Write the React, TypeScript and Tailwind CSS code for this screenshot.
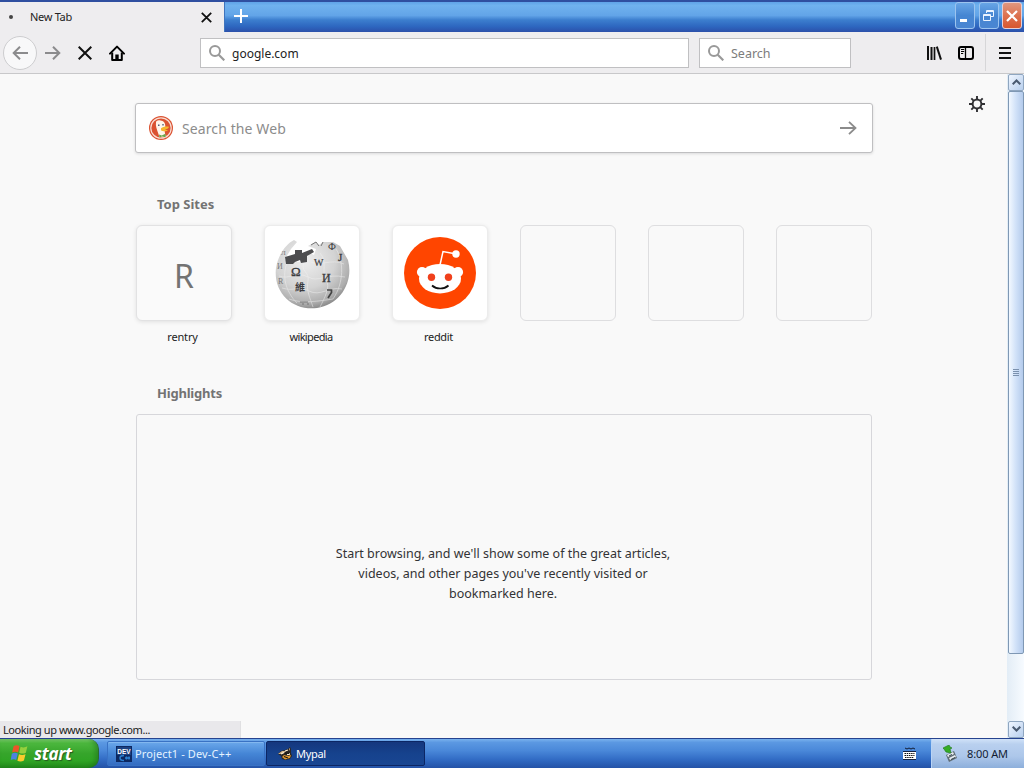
import type { ReactNode } from "react";

const ui = "font-['Noto_Sans','Open_Sans',sans-serif]";

function SearchGlyph() {
  return (
    <svg className="block shrink-0" width="16" height="16" viewBox="0 0 16 16" fill="none" stroke="#999" strokeWidth="2">
      <circle cx="6" cy="6" r="5" />
      <path d="M9.7 9.7l5.6 5.6" strokeWidth="2.2" />
    </svg>
  );
}

function WindowButton({ close, children }: { close?: boolean; children: ReactNode }) {
  const look = close
    ? "bg-linear-to-b from-[#e0977f] via-[#dd7250] to-[#d8572f] border-[#e6cfd6]"
    : "bg-linear-to-b from-[#68a5e6] via-[#4686d2] to-[#4a86d2] border-[#9cc4ef]";
  return (
    <div className={`flex h-[27px] w-5 items-center justify-center rounded-[3px] border ${look}`}>
      {children}
    </div>
  );
}

function TitleBar() {
  return (
    <div className="flex h-8 border-t-2 border-[#2f4fa0]">
      <div className="flex h-[30px] w-[224px] shrink-0 items-center bg-[#eeedef] pl-[9px]">
        <div className="size-1 rounded-full bg-[#444]" />
        <span className="ml-[17px] text-[11px] leading-4 tracking-[-0.3px] text-[#222]">New Tab</span>
        <svg className="mr-[12px] ml-auto block" width="11" height="11" viewBox="0 0 11 11" stroke="#111" strokeWidth="1.8">
          <path d="M.8.8l9.4 9.4M10.2.8L.8 10.2" />
        </svg>
      </div>
      <div className="flex h-[30px] grow items-start border-l border-[#3f74bd] bg-[linear-gradient(to_bottom,#5fa3e8_0%,#70b2ee_12%,#62a4e8_45%,#3c7ece_60%,#2d66bf_82%,#2c50aa_100%)] pl-[9px]">
        <svg className="mt-[7px] block" width="14" height="14" viewBox="0 0 14 14" stroke="#fff" strokeWidth="2">
          <path d="M7 0v14M0 7h14" />
        </svg>
        <div className="mr-[2px] ml-auto flex gap-[3.5px]">
          <WindowButton>
            <div className="mt-[10px] mr-1 h-[3px] w-[7px] bg-white" />
          </WindowButton>
          <WindowButton>
            <svg className="block" width="11" height="11" viewBox="0 0 11 11" fill="none" stroke="#e9f3ff">
              <path d="M3.5 3V.5h7v6H8M3 1.5h7.5" />
              <path d="M.5 4.5h7v6h-7zM.5 5.5h7" />
            </svg>
          </WindowButton>
          <WindowButton close>
            <svg className="block" width="12" height="12" viewBox="0 0 12 12" stroke="#fff" strokeWidth="2.2">
              <path d="M1 1l10 10M11 1L1 11" />
            </svg>
          </WindowButton>
        </div>
      </div>
    </div>
  );
}

function Arrow({ back }: { back?: boolean }) {
  return (
    <svg className="block" width="16" height="14" viewBox="0 0 16 14" fill="none" stroke="#8b8b8d" strokeWidth="2">
      {back ? <path d="M16 7H1.5M8 .8L1.7 7 8 13.2" /> : <path d="M0 7h14.5M8 .8L14.3 7 8 13.2" />}
    </svg>
  );
}

function Toolbar() {
  return (
    <div className="flex h-[42px] items-center border-b border-[#c8c8ca] bg-[#eeedef] pl-[3px]">
      <div className="flex size-[34px] shrink-0 items-center justify-center rounded-full border border-[#cdcdcf] bg-[#f8f8f9]">
        <Arrow back />
      </div>
      <div className="ml-2">
        <Arrow />
      </div>
      <svg className="ml-[17px] block" width="14" height="14" viewBox="0 0 14 14" stroke="#111" strokeWidth="2">
        <path d="M.7.7l12.6 12.6M13.3.7L.7 13.3" />
      </svg>
      <svg className="ml-[17px] block" width="16" height="16" viewBox="0 0 16 16" fill="none" stroke="#000" strokeWidth="2">
        <path d="M1 8.6L8 1.6l7 7" strokeLinejoin="round" strokeLinecap="round" />
        <path d="M3.2 7.500V15h9.600V7.500" strokeLinejoin="round" />
        <path d="M6.300 9.500h3.400V15H6.300z" fill="#000" stroke="none" />
      </svg>
      <div className="ml-[75px] flex h-[30px] w-[489px] items-center border border-[#c0c0c2] bg-white pl-2">
        <SearchGlyph />
        <span className="mt-[2px] ml-[7px] text-[12px] leading-5 text-[#222]">google.com</span>
      </div>
      <div className="ml-[10px] flex h-[30px] w-[152px] items-center border border-[#c0c0c2] bg-white pl-2">
        <SearchGlyph />
        <span className="mt-[2px] ml-[7px] text-[12.5px] leading-5 text-[#7c7c7c]">Search</span>
      </div>
      <svg className="ml-[76px] block" width="15" height="14" viewBox="0 0 15 14" stroke="#111" strokeWidth="2">
        <path d="M1 0v14M4.500 1v13" />
        <path d="M7.500 1v13" strokeWidth="1.700" />
        <path d="M9.800 .6L14 13.600" />
      </svg>
      <svg className="ml-[16px] block" width="16" height="14" viewBox="0 0 16 14" fill="none" stroke="#000">
        <rect x="1" y="1" width="14" height="12" rx="2" strokeWidth="2" />
        <path d="M7.5 1v12" strokeWidth="1.3" />
        <path d="M3 3.500h3.200M3 5.500h3.200M3 7.500h2.200" />
      </svg>
      <div className="ml-[11px] h-[37px] w-px bg-[#d6d6d8]" />
      <svg className="ml-[13px] block" width="12" height="12" viewBox="0 0 12 12" stroke="#111" strokeWidth="2">
        <path d="M0 1h12M0 6h12M0 11h12" />
      </svg>
    </div>
  );
}

function Duck() {
  return (
    <svg className="block" width="24" height="24" viewBox="0 0 24 24">
      <circle cx="12" cy="12" r="12" fill="#db5231" />
      <circle cx="12" cy="12" r="10.2" fill="none" stroke="#f8ded5" strokeWidth="1.2" />
      <path d="M7 6.2c.3-1.6 2.5-2.4 4.5-1.6 3 .2 5 2.4 4.8 5.6l-.6 5.3.8 4.9c-2 .9-4.300 1-6.200.4C9.300 17 7.100 12.200 6.900 9.200z" fill="#fff5ea" />
      <path d="M9 9.300h1.500M13.300 8.700h1.400" stroke="#50617b" strokeWidth="1.500" />
      <path d="M12 12.300c2-1.600 5-2 8-1.500-.5 2-2.500 2.600-4 2.800 1 .5 2.200.6 3 .4-1 1.800-5.600 1.700-7 .2z" fill="#f6b52e" />
      <path d="M10 18.500l2.700 1 3.800-1.700v3.500l-3.500-.8-2.500 1z" fill="#68a74b" />
    </svg>
  );
}

function WikipediaGlobe() {
  return (
    <svg className="block" width="76" height="76" viewBox="0 0 76 76">
      <defs>
        <radialGradient id="globe" cx=".4" cy=".3" r=".74">
          <stop offset="0" stopColor="#eeeeee" />
          <stop offset=".55" stopColor="#d3d3d3" />
          <stop offset=".85" stopColor="#adadad" />
          <stop offset="1" stopColor="#808080" />
        </radialGradient>
      </defs>
      <path
        d="M20 5l3 2-6 7-6 10 4 4 15-2 6-8 4 2 2-6-8-3 7-4 4 3 4-3 10 0 7 4 8 14C80 47 66 70 43 73 19 76-1 58 2 33 4 20 12 9 20 5z"
        fill="url(#globe)"
      />
      <g fill="none" stroke="#f2f2f2" strokeWidth=".8" opacity=".6">
        <path d="M13 28c-5 12-2 28 10 40M30 28c-4 8 6 9 4 18s2 17 5 26M46 18c8 9 1 18 6 26s-2 20-6 28M62 14c8 12 8 34-3 50" />
        <path d="M5 41c10 4 18-5 29 1s18-4 37 0M8 53c13 4 16-3 27 3s21-5 33-2M37 27c9 5 20-4 33 2M15 64c13 5 30 2 44 0" />
      </g>
      <path d="M11 22l10-3 0-4 7 0v3l10-4 2 3-7 4 0 6-6 1-1-3-5 2-2 2-7 0z" fill="#4d4d4f" />
      <g fill="#3b3b3e" className="font-['Liberation_Serif','Noto_Sans_CJK_SC',serif]">
        <text x="17" y="41" fontSize="13" stroke="#3b3b3e" strokeWidth=".3">Ω</text>
        <text x="40" y="31" fontSize="10" stroke="#3b3b3e" strokeWidth=".2">W</text>
        <text x="48" y="47" fontSize="12" stroke="#3b3b3e" strokeWidth=".3">И</text>
        <text x="21" y="56" fontSize="10" className="font-['Noto_Sans_CJK_SC',sans-serif] font-bold">維</text>
        <path d="M53 55h4.500v2.500L54 63" fill="none" stroke="#444" strokeWidth="1.700" />
        <text x="54" y="15" fontSize="10">Ф</text>
        <text x="64" y="26" fontSize="11" stroke="#3b3b3e" strokeWidth=".3">J</text>
        <text x="3" y="34" fontSize="8" fill="#777">И</text>
        <text x="4" y="49" fontSize="8" fill="#777">R</text>
        <text x="7" y="20" fontSize="7" fill="#777">Л</text>
        <path d="M26 67h8M28 69h2M33 69h2" stroke="#777" />
        <path d="M37 10l5-3 3 4M47 11l2-4" fill="none" stroke="#777" />
      </g>
    </svg>
  );
}

function RedditFace() {
  return (
    <svg className="block" width="72" height="72" viewBox="0 0 72 72">
      <circle cx="36" cy="36" r="36" fill="#ff4500" />
      <path d="M36 28l3-13.500 12 2.300" fill="none" stroke="#fff" strokeWidth="1.500" />
      <circle cx="52" cy="17" r="3.700" fill="#fff" />
      <circle cx="18" cy="35" r="5.100" fill="#fff" />
      <circle cx="54" cy="35" r="5.100" fill="#fff" />
      <ellipse cx="36" cy="41.700" rx="21" ry="14.800" fill="#fff" />
      <circle cx="27.500" cy="40.300" r="3.700" fill="#f0401c" />
      <circle cx="44.500" cy="40.300" r="3.700" fill="#f0401c" />
      <path d="M28 48.500c4.500 4 12 4 16.500 0" fill="none" stroke="#111" strokeWidth="1.700" />
    </svg>
  );
}

function Tile({ label, white, children }: { label?: ReactNode; white?: boolean; children?: ReactNode }) {
  const look = label
    ? `shadow-[0_1px_4px_rgba(12,12,13,0.1)] ${white ? "bg-white border-[#ececec]" : "bg-[#fafafa] border-[#e2e2e3]"}`
    : "border-[#dedee0]";
  return (
    <div className="flex w-24 flex-col items-center">
      <div className={`flex size-24 items-center justify-center rounded-md border ${look}`}>{children}</div>
      {label && <div className="mt-2 mr-[3px] flex text-[11px] leading-4 text-[#222]">{label}</div>}
    </div>
  );
}

function NewTabPage() {
  return (
    <div className="flex w-[1007px] flex-col bg-[#f9f9f9]">
      <div className="flex h-[79px] items-start">
        <div className="mt-[29px] ml-[135px] flex h-[50px] w-[738px] items-center rounded-[3px] border border-[#bfbfc1] bg-white pl-[13px] shadow-[0_1px_3px_rgba(12,12,13,0.12)]">
          <Duck />
          <span className="mt-px ml-[9px] text-[14px] leading-5 tracking-[0.1px] text-[#8c8c8c]">Search the Web</span>
          <svg className="mr-[15px] ml-auto block" width="17" height="14" viewBox="0 0 17 14" fill="none" stroke="#8b8b8b" strokeWidth="1.800">
            <path d="M0 7h15.500M9 .8L15.500 7 9 13.200" />
          </svg>
        </div>
        <svg className="mt-[22px] ml-[96px] block" width="16" height="16" viewBox="0 0 16 16" fill="none" stroke="#303033" strokeWidth="2">
          <circle cx="8" cy="8" r="4.400" />
          <path d="M8 0v3.500M8 12.500v3.500M0 8h3.500M12.500 8h3.500M2.300 2.300l2.500 2.500M11.200 11.200l2.500 2.500M2.300 13.700l2.500-2.500M11.200 4.800l2.500-2.500" strokeWidth="1.900" />
        </svg>
      </div>
      <h2 className="mt-[41px] ml-[157px] text-[13px] leading-5 font-bold text-[#737373]">Top Sites</h2>
      <div className="mt-[11px] ml-[136px] flex h-[120px] gap-8">
        <Tile label={<span className="tracking-[-0.15px]">rentry</span>}>
          <span className="mt-1.5 text-[32px] leading-10 text-[#737373]">R</span>
        </Tile>
        <Tile white label={<span className="ml-px tracking-[-0.65px]">wikipedia</span>}>
          <WikipediaGlobe />
        </Tile>
        <Tile white label={<span className="tracking-[-0.35px]">reddit</span>}>
          <RedditFace />
        </Tile>
        <Tile />
        <Tile />
        <Tile />
      </div>
      <h2 className="mt-[38px] ml-[157px] text-[13px] leading-5 font-bold tracking-[-0.2px] text-[#737373]">Highlights</h2>
      <div className="mt-[11px] ml-[136px] flex h-[266px] w-[736px] justify-center rounded-[3px] border border-[#d7d7db] pt-[129px] pr-[2px]">
        <p className="text-center text-[12.500px] leading-5 text-[#333335]">
          Start browsing, and we'll show some of the great articles,
          <br />
          videos, and other pages you've recently visited or
          <br />
          bookmarked here.
        </p>
      </div>
      <div className="mt-auto flex h-[17px] w-[241px] items-center border-r border-[#e0e0e2] bg-[#e9e8eb] pt-px pl-[3px] text-[11px] leading-4 tracking-[-0.43px] text-[#222]">
        Looking up www.google.com...
      </div>
    </div>
  );
}

function ScrollButton({ down }: { down?: boolean }) {
  return (
    <div className="flex h-[17px] w-4 items-center justify-center rounded-[2px] border border-[#8fa6c0] bg-linear-to-br from-[#f0f6ff] to-[#b8cfed] pb-px">
      <svg className="block" width="9" height="6" viewBox="0 0 9 6" fill="none" stroke="#4a5a70" strokeWidth="2">
        {down ? <path d="M.7.7l3.800 3.800L8.300.7" /> : <path d="M.7 5.300l3.800-3.800 3.800 3.800" />}
      </svg>
    </div>
  );
}

function ScrollBar() {
  return (
    <div className="flex w-[17px] flex-col items-end bg-linear-to-r from-[#e3edf6] to-[#f7fbff]">
      <ScrollButton />
      <div className="flex h-[563px] w-4 flex-col items-center justify-center gap-px rounded-[2px] border border-[#7f98b4] bg-linear-to-r from-[#f2f8ff] via-[#d0e1f8] to-[#b4cbec] pb-px">
        {[0, 1, 2, 3].map((n) => (
          <div key={n} className="h-px w-1.5 bg-[#7b91ae]" />
        ))}
      </div>
      <div className="mt-auto">
        <ScrollButton down />
      </div>
    </div>
  );
}

function WindowsFlag() {
  return (
    <svg className="block" width="19" height="19" viewBox="0 0 17 18">
      <path d="M3 2c2-1.300 4-1 5.500 0L7.200 8C5.500 7 3.500 7 1.500 8z" fill="#ed5529" />
      <path d="M9.500 2.500c2 1 4 1 6.500-.3l-1.500 6c-2 1.200-4 1.200-6.300.1z" fill="#95cf3d" />
      <path d="M1.200 9.200c2-1.200 4-1 5.700-.1l-1.500 6c-1.600-.9-3.500-.9-5.200 0z" fill="#4c83e0" />
      <path d="M8 9.600c2 1 4 1 6.200 0l-1.500 6c-2 1.200-4.200 1.200-6.200.2z" fill="#f9cb2d" />
    </svg>
  );
}

function TaskBar() {
  return (
    <div className="flex h-[30px] border-t border-[#26438f] bg-[linear-gradient(to_bottom,#79b2ee_0%,#5b98e2_12%,#4a88d9_40%,#326cc5_70%,#2452a6_100%)]">
      <div className="flex h-[29px] w-[99px] shrink-0 items-center rounded-r-[10px] border-r border-[#2a6b30] bg-[linear-gradient(to_bottom,#7fd070_0%,#4cb73e_14%,#36a52b_50%,#2fa424_75%,#228a1b_100%)] pl-[10px] shadow-[inset_-3px_0_4px_rgba(20,90,20,0.35)]">
        <WindowsFlag />
        <span className="ml-[5px] font-['Open_Sans','Noto_Sans',sans-serif] text-[17px] leading-6 font-bold tracking-[-0.3px] text-white italic [text-shadow:1px_1px_1px_#25591f]">
          start
        </span>
      </div>
      <div className="mt-[2px] ml-2 flex h-[25px] w-[158px] items-center rounded-[2px] border border-[#3972c4] bg-linear-to-b from-[#6ba8eb] via-[#4586d6] to-[#356dc2] pl-[8px] shadow-[inset_0_1px_0_#82b7ef]">
        <svg className="block" width="16" height="16" viewBox="0 0 16 16">
          <rect width="16" height="16" fill="#0c2861" />
          <rect x="1" y="1" width="14" height="8" fill="#1c4180" />
          <text x="8" y="7.500" textAnchor="middle" fontSize="6.500" fill="#fff" className="font-['Liberation_Sans',sans-serif] font-bold">DEV</text>
          <path d="M8 9.500c-3 0-4 1-4 2.500s1 2.500 4 2.500M9 12h5M10.500 10.500v3M13 10.500v3" stroke="#2b80d0" strokeWidth="1.500" fill="none" />
        </svg>
        <span className="ml-[3px] text-[11px] leading-4 tracking-[0.12px] text-[#e5f3ff]">Project1 - Dev-C++</span>
      </div>
      <div className="mt-[2px] ml-[1px] flex h-[25px] w-[159px] items-center rounded-[2px] border border-[#0c2664] bg-linear-to-b from-[#15377e] via-[#16428d] to-[#194692] pl-[10px]">
        <svg className="block" width="16" height="16" viewBox="0 0 16 16">
          <path d="M1 8l3-3 4-1 3-1 2-2 1 2v4l1 3-2 3-5 1-3-1-1-3z" fill="#2b2623" />
          <path d="M1 8l4-3 4 0-2 2-4 1zM12 3l1-1v3z" fill="#d3b68c" />
          <path d="M5 11l2-2 4 1 3-1-1 3-5 1.500z" fill="#dc952e" />
          <path d="M4 8l3-1.500M10 8.500l3-.5M8 5l3-1" stroke="#fff1d2" strokeWidth="1.300" />
          <path d="M8 7l4 .5M7 10.500l4 1.500" stroke="#111" />
        </svg>
        <span className="ml-[3px] text-[11px] leading-4 tracking-[-0.3px] text-white">Mypal</span>
      </div>
      <div className="ml-auto flex items-center pr-[15px]">
        <svg className="block" width="13" height="14" viewBox="0 0 13 14">
          <path d="M2 1l2 1 2-1 2 1 2-1 2 1" fill="none" stroke="#111d35" />
          <rect y="4" width="13" height="9" fill="#fff" />
          <path d="M1.500 6.500h10M1.500 8.500h10M2 10.500h9" stroke="#111" strokeDasharray="1.500 .7" />
          <path d="M0 12.500h13M0 4.500h13" stroke="#162443" />
        </svg>
      </div>
      <div className="flex w-[93px] items-center border-l border-[#b9d4f6] bg-[linear-gradient(to_bottom,#d0e2f8_0%,#b9d0ef_18%,#adc7ea_60%,#8dafdb_100%)] pl-[11px]">
        <svg className="block" width="15" height="17" viewBox="0 0 15 17">
          <path d="M3 10l8-4 3 7-8 4z" fill="#5f6d75" />
          <path d="M4 10l6-3 1 2-6 3zM6 13l6-3 1 2-6 3z" fill="#e7ecef" />
          <path d="M8 14.500l4-2M6 11l3-1.500" stroke="#33434d" />
          <path d="M0 3l6-3 1 2 2 1-2 1 1 4-5-1-2-3z" fill="#35ad24" stroke="#257e22" strokeWidth=".7" />
        </svg>
        <span className="ml-[9px] text-[11px] leading-4 tracking-[-0.1px] text-[#111c32]">8:00 AM</span>
      </div>
    </div>
  );
}

export default function App() {
  return (
    <div className={`flex h-[768px] w-[1024px] flex-col overflow-hidden ${ui}`}>
      <TitleBar />
      <Toolbar />
      <div className="flex min-h-0 grow">
        <NewTabPage />
        <ScrollBar />
      </div>
      <TaskBar />
    </div>
  );
}
